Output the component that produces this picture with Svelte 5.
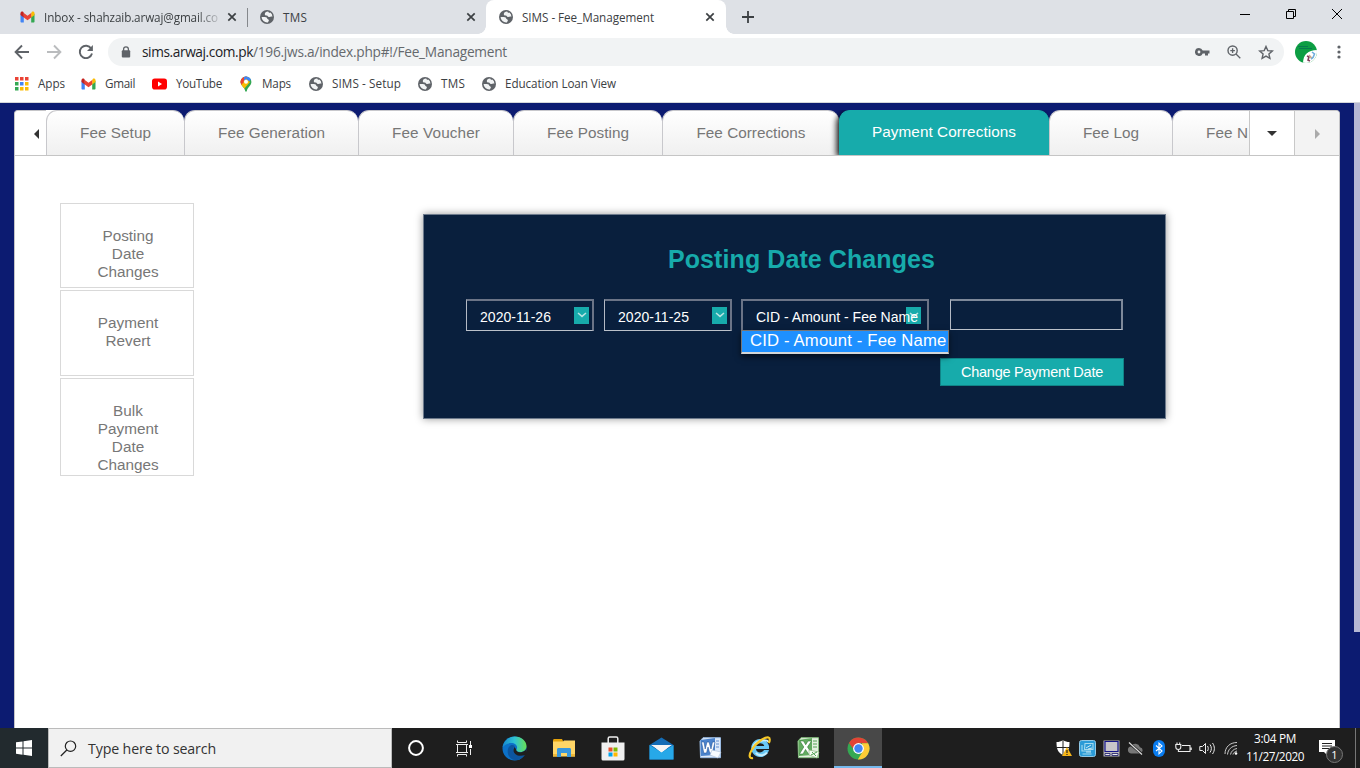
<script>
  const feeTabs = [
    { label: 'Fee Setup', width: 138, text: 71 },
    { label: 'Fee Generation', width: 174, text: 107 },
    { label: 'Fee Voucher', width: 155, text: 88 },
    { label: 'Fee Posting', width: 149, text: 82 },
    { label: 'Fee Corrections', width: 177, text: 109 },
    { label: 'Payment Corrections', width: 210, text: 144, active: true },
    { label: 'Fee Log', width: 123, text: 56 },
    { label: 'Fee N', width: 77, text: 42, cut: true }
  ];

  const bookmarks = [
    { icon: 'apps', label: 'Apps', text: 27, gap: 16 },
    { icon: 'gmail', label: 'Gmail', text: 30, gap: 17 },
    { icon: 'youtube', label: 'YouTube', text: 46, gap: 16 },
    { icon: 'maps', label: 'Maps', text: 29, gap: 17 },
    { icon: 'globe', label: 'SIMS - Setup', text: 69, gap: 16 },
    { icon: 'globe', label: 'TMS', text: 24, gap: 16 },
    { icon: 'globe', label: 'Education Loan View', text: 111, gap: 0 }
  ];

  const sideItems = [
    { lines: ['Posting', 'Date', 'Changes'], height: 85 },
    { lines: ['Payment', 'Revert'], height: 86 },
    { lines: ['Bulk', 'Payment', 'Date', 'Changes'], height: 98 }
  ];

  const pinned = ['edge', 'explorer', 'store', 'mail', 'word', 'ie', 'excel', 'chrome'];
  const tray = ['defender', 'graphics', 'display', 'cloud', 'bluetooth', 'power', 'volume', 'wifi'];

  // Spreads a label over the given width by adjusting its tracking.
  function fit(node, width) {
    const natural = node.getBoundingClientRect().width;
    const count = node.textContent.length;
    node.style.letterSpacing = `${(width - natural) / count}px`;
  }
</script>

{#snippet icon(name)}
  {#if name === 'globe'}
    <svg width="14" height="14" viewBox="0 0 14 14"><circle cx="7" cy="7" r="7" fill="#5f6368" /><path d="M8.200 1.600C6.200 1.500 4.700 2.900 4.800 4.300c.1 1.100 1 1.300 2.100 1.200.9 0 .9 1.300 2 1.500 1.300.2 1.700-.8 3.500-.3a5.400 5.400 0 0 0-2-4.200C9.700 3.300 8.600 2.700 8.200 1.600z" fill="#f1f3f4" /><path d="M1.600 6.900h3.300c1.500 0 2.300.8 2.300 1.700 0 .9 1.700.6 1.700 1.800 0 .9-.9 1-1.100 2A5.500 5.500 0 0 1 1.600 6.900z" fill="#f1f3f4" /></svg>
  {:else if name === 'gmail'}
    <svg width="15" height="12" viewBox="0 0 15 12"><path d="M.5 2.800v7.700c0 .6.4 1 1 1h2.300V5.500z" fill="#4285f4" /><path d="M14.500 2.800v7.700c0 .6-.4 1-1 1h-2.300V5.500z" fill="#34a853" /><path d="M11.200 2.200v4.300l3.300-2.500V2.300c0-1.700-1.700-2.200-2.800-1.300z" fill="#fbbc04" /><path d="M3.800 6.500V2l3.700 2.700L11.200 2v4.500L7.500 9.200z" fill="#ea4335" /><path d="M.5 2.300V4l3.300 2.500V2L3.300 1C2.200.1.5.8.5 2.300z" fill="#c5221f" /></svg>
  {:else if name === 'apps'}
    <svg width="14" height="14" viewBox="0 0 14 14">
      {#each ['#ea4335', '#ea4335', '#ea4335', '#34a853', '#4285f4', '#fbbc04', '#34a853', '#fbbc04', '#fbbc04'] as color, i}
        <rect x={(i % 3) * 5} y={Math.floor(i / 3) * 5} width="3.500" height="3.500" fill={color} />
      {/each}
    </svg>
  {:else if name === 'youtube'}
    <svg width="15" height="12" viewBox="0 0 15 12"><rect y=".5" width="15" height="11" rx="2.800" fill="#f00" /><path d="M6 3.600 10 6 6 8.400z" fill="#fff" /></svg>
  {:else if name === 'maps'}
    <svg width="14" height="16" viewBox="0 0 14 16"><clipPath id="pin"><path d="M7 .5a5.400 5.400 0 0 1 5.400 5.400c0 3.700-4 5.100-4.600 9-.1 1-1.500 1-1.600 0C5.600 11 1.600 9.600 1.600 5.900A5.400 5.400 0 0 1 7 .5z" /></clipPath><g clip-path="url(#pin)"><path d="M0 0h14v16H0z" fill="#34a853" /><path d="M0 0h9L4 8 0 6z" fill="#ea4335" /><path d="M5 0h9v2L7 8 5 5z" fill="#4285f4" /><path d="m1 9 6-6 4 3-6 7z" fill="#fbbc04" /><path d="M0 3 5 6 2 9-1 7z" fill="#ea4335" /></g><circle cx="7" cy="5.800" r="2" fill="#fff" /></svg>
  {:else if name === 'close'}
    <svg width="10" height="10" viewBox="0 0 10 10"><path d="m1.300 1.300 7.400 7.400M8.700 1.300 1.300 8.700" stroke="#3c4043" stroke-width="1.700" /></svg>
  {:else if name === 'edge'}
    <svg width="25" height="25" viewBox="0 0 25 25"><defs><linearGradient id="eg" x1="0" x2="1"><stop stop-color="#1688cf" /><stop offset=".5" stop-color="#2fc3d4" /><stop offset="1" stop-color="#68df55" /></linearGradient></defs><circle cx="12.500" cy="12.500" r="12" fill="#0c71c8" /><path d="M.6 11.500C1.500 5 6.500.5 12.700.5c7 0 11.800 4.800 11.800 9.600 0 3.900-3 6-6 6-2.600 0-4.400-1-4.400-2 0-.7 1-1.100 1-2.700 0-2.300-2.500-4.300-6-4.300-4 0-7 2-8.500 4.400z" fill="url(#eg)" /><path d="M8.500 9.500c-3.700 2.300-4 9.300.5 13 2.500 2 6.500 2 9 .7 2-1 4-3 4.900-4.900-3.500 1.900-8.900 1.700-11-1.800-1.800-3-.2-5.500 1.200-6.200-1.500-1.300-3.100-1.500-4.600-.8z" fill="#0c559f" /><path d="M14.300 13.800c-.5 1.300 2.200 3.300 5.700 2.100 2.500-.7 4-2 4.500-3.600v5l-1 1.400c-3.500 1.900-9 1.500-11.200-1.700-1.400-2-1-4.500.4-6z" fill="#1e1e1e" /></svg>
  {:else if name === 'explorer'}
    <svg width="22" height="20" viewBox="0 0 22 20"><path d="M0 2.500C0 1.500.5 1 1.500 1H9l1 2v2H0z" fill="#e5a20b" /><path d="M0 3.500h10l1-1h11V18.500H0z" fill="#ffd667" /><path d="M0 16h5v2.500H0zm17 0h5v2.500h-5z" fill="#edb838" /><path d="M4 11.500c0-.8.500-1.500 1.500-1.500h11c1 0 1.500.7 1.500 1.500V19h-4v-4H8v4H4z" fill="#3997dc" /></svg>
  {:else if name === 'store'}
    <svg width="24" height="25" viewBox="0 0 24 25"><path d="M7.200 8V2.500c0-1 .5-1.500 1.500-1.500h6.600c1 0 1.500.5 1.500 1.500V8" fill="none" stroke="#eee" stroke-width="1.500" /><path d="M.5 6.500h23V23a1.500 1.500 0 0 1-1.500 1.500H2A1.500 1.500 0 0 1 .5 23z" fill="#f0f0f0" /><path d="M7.500 11.500h4v4h-4z" fill="#e8502d" /><path d="M12.500 11.500h4v4h-4z" fill="#7fba00" /><path d="M7.500 16.500h4v4h-4z" fill="#00a4ef" /><path d="M12.500 16.500h4v4h-4z" fill="#ffb900" /></svg>
  {:else if name === 'mail'}
    <svg width="25" height="23" viewBox="0 0 25 23"><path d="M.5 8 12.500.5 24.500 8v14.500H.5z" fill="#146cb5" /><path d="M3 8h19l-9.500 8z" fill="#f5f5f5" /><path d="M.5 8 12.500 15.500 24.500 8v14.500H.5z" fill="#27a8e8" /><path d="m2 8 10.500 6.500L23 8z" fill="#f5f5f5" /></svg>
  {:else if name === 'word'}
    <svg width="23" height="22" viewBox="0 0 23 22"><path d="M4 .7h17.500v20H1.500L1 4z" fill="#dce9fa" stroke="#9bbbe2" /><path d="M1.500 3 16 1v17L2 19z" fill="#4b83cc" /><path d="m2.500 5 2.300 11h2.700L9 10l1.700 6h2.600L16 5h-2.500l-1.500 7-2-7H8l-1.800 7L5 5z" fill="#fff" stroke="#174a94" stroke-width=".5" /><path d="m13 13 9 2-3 6-8-3z" fill="#f7fbff" stroke="#a9bed8" stroke-width=".6" /><path d="M17 4h3M17 7h3M17 10h3" stroke="#628dcc" /></svg>
  {:else if name === 'ie'}
    <svg width="24" height="24" viewBox="0 0 24 24"><path d="M21 14a9 9 0 1 1 0-4v3H8c.2 4 6 4.700 8 1z" fill="#68c8f5" /><path d="M8.200 10h8c-.5-3.500-7-3.800-8 0z" fill="#1e1e1e" /><path d="M20.500 6C19 3.500 10 3.500 6 9l-1.500 4M8 16.800c2 3.400 8 3.500 11-.2" stroke="#c8effd" stroke-width="2" fill="none" /><path d="M5 22C1 23 .5 19 4 13.500 8 6.500 17 .5 20.500 1.500c1.700.5 1.500 3.500.2 5.500" stroke="#f8c928" stroke-width="2.200" fill="none" /></svg>
  {:else if name === 'excel'}
    <svg width="23" height="22" viewBox="0 0 23 22"><path d="M4 .7h17.500v20H1.500L1 4z" fill="#e3f1df" stroke="#84bd7e" /><path d="M1.500 3 15 1v17L2 19z" fill="#62ab60" /><path d="M3 4h3.500l2.200 3.800L11 4h3.500l-4 6 4.500 7h-3.500l-3-4.600L6 17H2.500l4.300-7z" fill="#fff" stroke="#216a27" stroke-width=".5" /><path d="m12 13 10 2-2 6-8-3z" fill="#f4fcf1" stroke="#8cb584" stroke-width=".7" /><path d="m15 15 4 4M20 15l-6 3M16 4h4M16 7h4M16 10h4" stroke="#54a157" /></svg>
  {:else if name === 'chrome'}
    <svg width="23" height="23" viewBox="0 0 23 23"><circle cx="11.500" cy="11.500" r="11" fill="#35a853" /><path d="M2 6a11 11 0 0 1 19.100.2H11.500L7 13z" fill="#e34335" /><path d="M21.100 6.200a11 11 0 0 1-10.300 16.300L16 14l-1-7.800z" fill="#fdcc36" /><circle cx="11.500" cy="11.500" r="5.400" fill="#fff" /><circle cx="11.500" cy="11.500" r="4.200" fill="#4285f4" /></svg>
  {:else if name === 'defender'}
    <svg width="17" height="18" viewBox="0 0 17 18"><path d="M8 1c2 1.500 4 2 6.500 2 0 6.500-1 10.500-6.500 13C2.500 13.500 1.500 9.500 1.500 3 4 3 6 2.500 8 1z" fill="#fff" /><path d="M8 1v15M1.500 8.500h13" stroke="#222" /><path d="m12 8 5 9H7z" fill="#f7b618" /><path d="M12 11v3M12 15v1" stroke="#222" stroke-width="1.200" /></svg>
  {:else if name === 'graphics'}
    <svg width="17" height="17" viewBox="0 0 17 17"><rect x=".5" y=".5" width="16" height="16" rx="2" fill="#2b9bd7" stroke="#90c8e6" /><path d="M6 3.500h8v6H5.500zM3 5v6h9M3.500 14h9" fill="none" stroke="#a5dbee" stroke-width="1.100" /><path d="m7 8 5-3M9 9l4-1M7 12h5" stroke="#d9f2f8" stroke-width=".9" /></svg>
  {:else if name === 'display'}
    <svg width="17" height="17" viewBox="0 0 17 17"><path d="M.5 .5h16v16H.5z" fill="#b9b8bc" /><path d="M2 1.500h13v10H2z" fill="#c8c6ca" stroke="#15158a" stroke-width="1.200" /><path d="M2 13.500h5v2H2zm7 0h6v2H9z" fill="#eee" stroke="#151565" stroke-width=".8" /></svg>
  {:else if name === 'cloud'}
    <svg width="17" height="15" viewBox="0 0 17 15"><path d="M4 12.500a3.700 3.700 0 0 1 0-7.300 5 5 0 0 1 9 1 3.200 3.200 0 0 1 0 6.300z" fill="#777" /><path d="m2 2 13 11" stroke="#1f1f1f" stroke-width="2.600" /><path d="m2 1.500 13 12" stroke="#ddd" stroke-width="1.200" /></svg>
  {:else if name === 'bluetooth'}
    <svg width="12" height="17" viewBox="0 0 12 17"><rect width="12" height="17" rx="6" fill="#087cf0" /><path d="m3 5.500 6 5.500-3 2.800V3.200l3 2.800-6 5" fill="none" stroke="#fff" stroke-width="1.100" /></svg>
  {:else if name === 'power'}
    <svg width="17" height="14" viewBox="0 0 17 14"><path d="M7 4.500h8v6H4.500M16.200 6.500v2.500M.8 3.500h5V6a2.300 2.300 0 0 1-5 0zM2 3.500v-2M4.700 3.500v-2M3.400 8v2.500h2" fill="none" stroke="#eee" stroke-width="1.100" /></svg>
  {:else if name === 'volume'}
    <svg width="17" height="15" viewBox="0 0 17 15"><path d="M.8 5.500h2.700l3-3v10l-3-3H.8zM8.500 5c1 1.400 1 3.600 0 5M11 3.500c1.800 2.400 1.800 5.600 0 8M13.500 2c2.500 3.500 2.500 7.500 0 11" fill="none" stroke="#eee" /></svg>
  {:else if name === 'wifi'}
    <svg width="14" height="14" viewBox="0 0 14 14"><path d="M1 13C1 6 6 1.500 13 1.500M3.500 13.500C4 8.500 7.500 5 13 4.500M6.500 13.500c.5-3 3-5.500 6.500-6M9 13.500c.3-1.700 2-3 4-3.500" fill="none" stroke="#ccc" /><circle cx="12" cy="12.500" r="1.300" fill="#fff" /></svg>
  {/if}
{/snippet}

<div class="screen">
  <header class="browser">
    <div class="tabstrip">
      <div class="btab first">
        {@render icon('gmail')}
        <span class="btitle fade"><span use:fit={174}>Inbox - shahzaib.arwaj@gmail.co</span></span>
        {@render icon('close')}
      </div>
      <div class="btab">
        {@render icon('globe')}
        <span class="btitle"><span use:fit={24}>TMS</span></span>
        {@render icon('close')}
      </div>
      <div class="btab current">
        {@render icon('globe')}
        <span class="btitle"><span use:fit={132}>SIMS - Fee_Management</span></span>
        {@render icon('close')}
      </div>
      <svg class="plus" width="12" height="12" viewBox="0 0 12 12"><path d="M6 0v12M0 6h12" stroke="#3c4043" stroke-width="1.800" /></svg>
      <div class="winctl">
        <svg width="12" height="12" viewBox="0 0 12 12"><path d="M1 6.500h10" stroke="#000" /></svg>
        <svg width="12" height="12" viewBox="0 0 12 12"><path d="M1.500 3.500h7v7h-7zM3.500 3.500v-2h7v7h-2" fill="none" stroke="#000" /></svg>
        <svg width="12" height="12" viewBox="0 0 12 12"><path d="m1 1 10 10M11 1 1 11" stroke="#000" /></svg>
      </div>
    </div>

    <div class="toolbar">
      <div class="nav">
        <svg width="16" height="16" viewBox="0 0 16 16"><path d="M15 8H2M8 1.500 1.600 8 8 14.500" fill="none" stroke="#5f6368" stroke-width="1.900" /></svg>
        <svg width="16" height="16" viewBox="0 0 16 16"><path d="M1 8h13M8 1.500 14.400 8 8 14.500" fill="none" stroke="#babcbe" stroke-width="1.900" /></svg>
        <svg width="16" height="16" viewBox="0 0 16 16"><path d="M13.200 4.500A6.200 6.200 0 1 0 14 9.500" fill="none" stroke="#5f6368" stroke-width="1.900" /><path d="M14.900 1v6H9z" fill="#5f6368" /></svg>
      </div>
      <div class="omnibox">
        <svg width="10" height="12" viewBox="0 0 10 12"><path d="M2.600 5V3.300a2.400 2.400 0 0 1 4.800 0V5" fill="none" stroke="#5f6368" stroke-width="1.300" /><rect x=".8" y="4.300" width="8.400" height="7.200" rx="1" fill="#5f6368" /></svg>
        <span class="url"><b use:fit={111}>sims.arwaj.com.pk</b><span use:fit={254}>/196.jws.a/index.php#!/Fee_Management</span></span>
        <div class="actions">
          <svg width="15" height="8" viewBox="0 0 15 8"><path d="M4 0a4 4 0 0 1 3.700 2.500H14.500v3H13v2h-3v-2H7.700A4 4 0 1 1 4 0zm0 2.600a1.400 1.400 0 1 0 0 2.800 1.400 1.400 0 0 0 0-2.800z" fill="#5f6368" /></svg>
          <svg width="14" height="14" viewBox="0 0 14 14"><circle cx="5.600" cy="5.600" r="4.600" fill="none" stroke="#5f6368" stroke-width="1.400" /><path d="m9 9 4.300 4.300M5.600 3.300v4.600M3.300 5.600h4.600" stroke="#5f6368" stroke-width="1.300" /></svg>
          <svg width="16" height="15" viewBox="0 0 16 15"><path d="m8 1.500 1.800 4.100 4.500.4-3.400 3 1 4.400L8 11.100l-3.900 2.300 1-4.400L1.700 6l4.500-.4z" fill="none" stroke="#5f6368" stroke-width="1.400" /></svg>
        </div>
      </div>
      <svg class="avatar" width="22" height="22" viewBox="0 0 22 22"><clipPath id="av"><circle cx="11" cy="11" r="11" /></clipPath><g clip-path="url(#av)"><path d="M0 0h22v22H0z" fill="#0d9e43" /><path d="M3 5.500h10M4 7.500h13" stroke="#087a4e" /><path d="M8 22c0-8 5-13 14-13v13z" fill="#fff" /><path d="m12 15 2 1-1 3 2 1" stroke="#81405a" stroke-width="1.600" fill="none" /><path d="m17 11 2.500 2-1.500 3.500-2 1.500" stroke="#6faedc" stroke-width="1.600" fill="none" /><path d="m14 14 2.500 3" stroke="#c7a78a" stroke-width="1.500" /></g></svg>
      <svg width="4" height="14" viewBox="0 0 4 14"><g fill="#5f6368"><circle cx="2" cy="2" r="1.600" /><circle cx="2" cy="7" r="1.600" /><circle cx="2" cy="12" r="1.600" /></g></svg>
    </div>

    <nav class="bookmarks">
      {#each bookmarks as mark}
        <div class="mark" style:margin-right="{mark.gap}px">
          <span class="micon">{@render icon(mark.icon)}</span>
          <span class="mtext" style:width="{mark.text}px"><span use:fit={mark.text}>{mark.label}</span></span>
        </div>
      {/each}
    </nav>
  </header>

  <main class="page">
    <section class="sheet">
      <div class="tabs">
        <div class="scroll left"><i></i></div>
        <div class="list">
          {#each feeTabs as tab}
            <div class="tab" class:active={tab.active} class:cut={tab.cut} style:width="{tab.width}px"><span use:fit={tab.text}>{tab.label}</span></div>
          {/each}
        </div>
        <div class="scroll down"><i></i></div>
        <div class="scroll right"><i></i></div>
      </div>

      <div class="content">
        <aside class="side">
          {#each sideItems as item}
            <div class="card" style:height="{item.height}px">
              {#each item.lines as line}<div>{line}</div>{/each}
            </div>
          {/each}
        </aside>

        <section class="panel">
          <h1><span use:fit={267}>Posting Date Changes</span></h1>
          <div class="fields">
            {#each ['2020-11-26', '2020-11-25'] as date}
              <div class="select"><span use:fit={71}>{date}</span>
                <span class="chev"><svg width="10" height="6" viewBox="0 0 10 6"><path d="m1 1 4 3.400L9 1" fill="none" stroke="#b9e4e2" stroke-width="1.500" /></svg></span>
              </div>
            {/each}
            <div class="select wide">
              <span class="chev"><svg width="10" height="6" viewBox="0 0 10 6"><path d="m1 1 4 3.400L9 1" fill="none" stroke="#b9e4e2" stroke-width="1.500" /></svg></span>
              <span class="over" use:fit={162}>CID - Amount - Fee Name</span>
              <div class="options"><span use:fit={196.5}>CID - Amount - Fee Name</span></div>
            </div>
            <div class="input"></div>
          </div>
          <div class="submit"><span use:fit={142}>Change Payment Date</span></div>
        </section>
      </div>
    </section>
    <div class="thumb"></div>
  </main>

  <footer class="taskbar">
    <div class="start"><svg width="16" height="16" viewBox="0 0 16 16"><path d="M0 2.300 6.500 1.400V7.500H0zM7.500 1.200 16 0v7.500H7.500zM0 8.500h6.500v6.200L0 13.800zM7.500 8.500H16V16l-8.500-1.200z" fill="#fff" /></svg></div>
    <div class="search">
      <svg width="17" height="17" viewBox="0 0 17 17"><circle cx="10.500" cy="6.200" r="5.200" fill="none" stroke="#222" stroke-width="1.200" /><path d="m6.800 10-6 6" stroke="#222" stroke-width="1.200" /></svg>
      <span use:fit={128}>Type here to search</span>
    </div>
    <div class="sys"><svg width="16" height="16" viewBox="0 0 16 16"><circle cx="8" cy="8" r="6.900" fill="none" stroke="#fff" stroke-width="2" /></svg></div>
    <div class="sys"><svg width="17" height="17" viewBox="0 0 17 17"><path d="M1.500 .5v2h9v-2M0 4.500h12M1.500 4.500v8h9v-8M0 12.500h12M1.500 16.500v-2h9v2M14.500 1v4M14.500 9v6" fill="none" stroke="#eee" /><path d="M13 5h3v3h-3z" fill="#fff" /></svg></div>
    <div class="apps">
      {#each pinned as app}
        <div class="app" class:running={app === 'chrome'}>{@render icon(app)}</div>
      {/each}
    </div>
    <div class="tray">
      {#each tray as item}<span>{@render icon(item)}</span>{/each}
    </div>
    <div class="clock"><span use:fit={42}>3:04 PM</span><span use:fit={58}>11/27/2020</span></div>
    <div class="notice">
      <svg width="17" height="16" viewBox="0 0 17 16"><path d="M0 0h16v12H9v4l-4-4H0z" fill="#fff" /><path d="M3 3.500h10M3 6h10M3 8.500h7" stroke="#222" /></svg>
      <span class="count">1</span>
    </div>
    <div class="peek"></div>
  </footer>
</div>

<style>
  :global(body) { margin: 0; overflow: hidden; }
  .screen { width: 1360px; height: 768px; display: flex; flex-direction: column; overflow: hidden; white-space: nowrap; font-family: "Liberation Sans", Arial, sans-serif; }
  svg { display: block; flex: none; }
  .browser { height: 102px; border-bottom: 1px solid #d5d7da; background: #fff; font-family: "Open Sans", "Noto Sans", sans-serif; font-size: 11.700px; color: #3c4043; }
  .tabstrip { height: 34px; display: flex; align-items: center; background: #dee1e6; }
  .btab { box-sizing: border-box; width: 239px; height: 34px; padding: 0 10px 0 13px; display: flex; align-items: center; gap: 9px; }
  .btab.first { width: 247px; padding: 0 10px 0 20px; position: relative; }
  .btab.first::after { content: ""; position: absolute; right: -1px; top: 8px; width: 1px; height: 19px; background: #85888c; }
  .btab.current { position: relative; width: 240px; padding-right: 11px; background: #fff; border-radius: 8px 8px 0 0; }
  .btab.current::before, .btab.current::after { content: ""; position: absolute; bottom: 0; width: 8px; height: 8px; }
  .btab.current::before { left: -8px; background: radial-gradient(circle at 0 0, #dee1e6 7.500px, #fff 8px); }
  .btab.current::after { right: -8px; background: radial-gradient(circle at 100% 0, #dee1e6 7.500px, #fff 8px); }
  .btitle { flex: 1; }
  .btitle span { display: inline-block; }
  .fade { -webkit-mask-image: linear-gradient(90deg, #000 88%, rgb(0 0 0 / 20%)); mask-image: linear-gradient(90deg, #000 88%, rgb(0 0 0 / 20%)); }
  .plus { margin-left: 16px; }
  .winctl { display: flex; gap: 34px; margin: -6px 17px 0 auto; }
  .toolbar { height: 36px; display: flex; align-items: center; }
  .nav { display: flex; gap: 16px; width: 94px; padding-left: 14px; }
  .omnibox { box-sizing: border-box; width: 1176px; height: 28px; border-radius: 14px; background: #f1f3f4; display: flex; align-items: center; padding: 0 10px 0 13px; gap: 11px; font-size: 13.700px; }
  .url { color: #65696d; line-height: 20px; }
  .url b { font-weight: 400; color: #202124; }
  .url b, .url span { display: inline-block; }
  .actions { margin-left: auto; display: flex; align-items: center; gap: 17px; }
  .avatar { margin: 0 20px 0 11px; }
  .bookmarks { height: 28px; display: flex; align-items: center; padding-left: 14px; }
  .mark { display: flex; align-items: center; gap: 9px; }
  .micon { width: 15px; display: flex; justify-content: center; }
  .mtext { margin-top: -2px; }
  .mtext span { display: inline-block; }

  .page { flex: 1; background: #0c1b71; display: flex; justify-content: space-between; min-height: 0; padding-left: 14px; }
  .sheet { box-sizing: border-box; width: 1326px; margin-top: 7px; background: #fff; border: 1px solid #c5c5c8; border-bottom: 0; border-radius: 4px 4px 0 0; }
  .thumb { width: 6px; height: 529px; background: #b6b8d4; }
  .tabs { height: 44px; display: flex; border-bottom: 1px solid #c5c5c5; }
  .scroll { width: 44px; display: flex; align-items: center; justify-content: center; border-left: 1px solid #c8c8c8; background: #fff; }
  .scroll i { border: 5.500px solid transparent; }
  .scroll.left { width: 31px; border: 0; border-radius: 4px 0 0; }
  .left i { border-right-color: #333; border-left: 0; margin: 2px 0 0 11px; }
  .down i { border-top-color: #333; border-bottom: 0; margin: 1px 1px 0 0; }
  .right { background: #f3f3f3; border-radius: 0 4px 0 0; }
  .right i { border-left-color: #aaa; border-right: 0; margin-top: 2px; }
  .list { margin-top: -1px; flex: 1; display: flex; overflow: hidden; background: linear-gradient(90deg, #fff 0 12px, #0c1b71 12px); height: 45px; }
  .tab { box-sizing: border-box; height: 45px; flex: none; display: flex; align-items: center; justify-content: center; border: 1px solid #c8c8cc; border-width: 1px 0 0 1px; border-radius: 11px 11px 0 0; background: linear-gradient(#fff, #f0f0f0); color: #777; font-size: 15.300px; }
  .tab span { display: block; }
  .tab.active { background: #17abab; border-color: #17abab; color: #fff; box-shadow: -2px 2px 6px #000; padding: 0 1px 2px 0; }
  .tab.cut { border-radius: 11px 0 0; justify-content: flex-start; padding-left: 33px; }
  .content { display: flex; align-items: flex-start; }
  .side { display: flex; flex-direction: column; gap: 2px; padding: 47px 0 0 45px; }
  .card { box-sizing: border-box; width: 134px; border: 1px solid #d9d9d9; padding: 23px 0 0 2px; text-align: center; font-size: 15.300px; line-height: 18px; color: #777; }
  .panel { box-sizing: border-box; width: 743px; height: 205px; margin: 58px 0 0 229px; padding: 0 41px 0 42px; background: #091f3d; border: 1px solid #6d7a8c; box-shadow: 0 0 8px rgb(0 0 0 / 40%); color: #fff; }
  h1 { margin: 29px 0 24px 13px; font-size: 25px; line-height: 31px; color: #17abab; text-align: center; }
  h1 span { display: inline-block; }
  .fields { display: flex; }
  .select { position: relative; box-sizing: border-box; width: 128px; height: 32px; margin-right: 10px; padding: 2px 3px 0 13px; border: 2px solid #6b7487; border-bottom: 1px solid #bbc1ca; border-left: 1px solid #b4bac5; display: flex; align-items: center; justify-content: space-between; font-size: 14px; }
  .chev { width: 15px; height: 17px; background: #17abab; display: flex; align-items: center; justify-content: center; margin-top: -3px; }
  .select.wide { width: 188px; margin: 0 21px 0 -1px; padding-right: 6px; justify-content: flex-end; border-left: 2px solid #6b7487; }
  .over { position: absolute; left: 13px; top: 8px; }
  .options { box-sizing: border-box; position: absolute; left: -2px; top: 29px; width: 208px; height: 24px; background: #1e90ff; border: 1px solid #767676; border-bottom: 2px solid #d4d6d6; padding-left: 8px; font-size: 16.700px; line-height: 20px; box-shadow: 0 3px 6px rgb(0 0 0 / 60%); }
  .input { box-sizing: border-box; width: 173px; height: 31px; border: 2px solid #7e899a; border-bottom: 1px solid #bbc1ca; border-left: 1px solid #b4bac5; }
  .submit { box-sizing: border-box; width: 184px; height: 28px; margin: 27px 0 0 auto; border: 1px solid #108487; background: #17abab; font-size: 14.500px; line-height: 26px; text-align: center; }
  .submit span, .options span { display: inline-block; }

  .taskbar { height: 40px; flex: none; display: flex; align-items: center; background: #1e1e1e; color: #fff; font-family: "Open Sans", "Noto Sans", sans-serif; }
  .start { width: 48px; height: 40px; background: #222a2e; display: flex; align-items: center; justify-content: center; }
  .search { box-sizing: border-box; width: 344px; height: 40px; border: 1px solid #bbb; background: #f1f1f1; color: #333; font-size: 14.200px; display: flex; align-items: center; gap: 11px; padding-left: 11px; }
  .sys { width: 48px; display: flex; justify-content: center; }
  .apps { display: flex; margin-left: 2px; }
  .app { box-sizing: border-box; width: 49px; height: 40px; display: flex; align-items: center; justify-content: center; }
  .app.running { width: 48px; margin-left: 1px; background: #484848; border-bottom: 2px solid #76b9ed; padding-top: 2px; }
  .tray { display: flex; margin-left: auto; }
  .tray span { width: 24px; display: flex; align-items: center; justify-content: center; }
  .clock { width: 62px; display: flex; flex-direction: column; align-items: center; font-size: 11.800px; line-height: 18px; margin: -2px 13px 0 1px; }
  .notice { position: relative; width: 36px; }
  .count { position: absolute; left: 7px; top: 6px; width: 15px; height: 15px; border: 1px solid #777; border-radius: 50%; background: #333; font-size: 11px; line-height: 15px; text-align: center; }
  .peek { width: 4px; height: 40px; border-left: 1px solid #777; }
</style>
